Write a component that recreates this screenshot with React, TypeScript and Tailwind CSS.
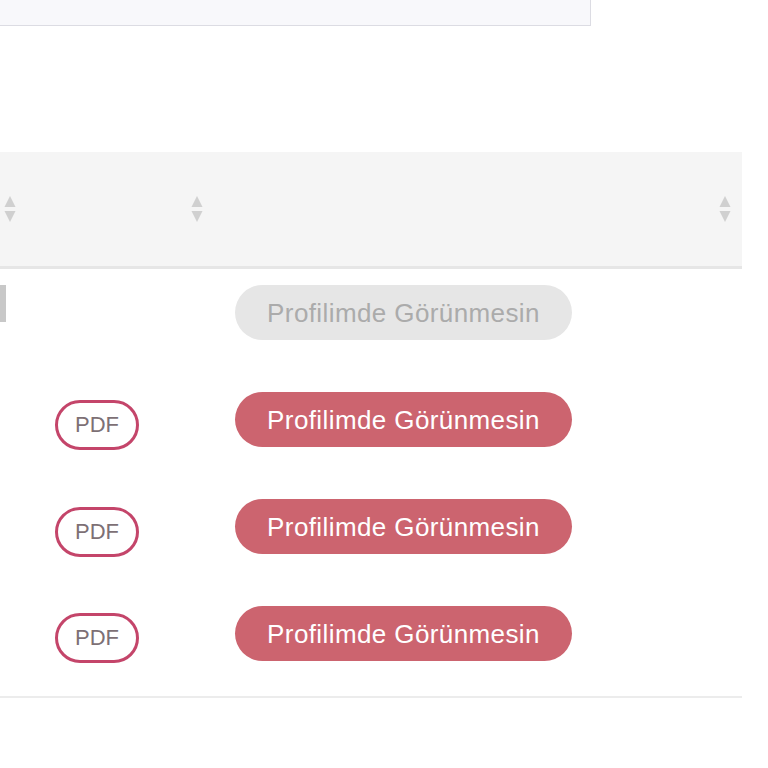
function SortIcon() {
  return (
    <svg width="14" height="30" viewBox="0 0 14 30" className="block">
      <path d="M7 2 L12.5 13 L1.5 13 Z" fill="#d0d0d0" />
      <path d="M7 28 L12.5 17 L1.5 17 Z" fill="#d0d0d0" />
    </svg>
  );
}

function PdfBadge() {
  return (
    <div className="w-[84px] h-[50px] rounded-full border-[3px] border-[#c4456a] flex items-center justify-center text-[22px] text-[#7d7075] leading-none">
      PDF
    </div>
  );
}

function HideButton({ disabled }: { disabled?: boolean }) {
  return (
    <button
      className={
        disabled
          ? "w-[337px] h-[55px] rounded-full bg-[#e6e6e6] text-[#ababab] text-[26px] tracking-[0.4px] leading-none"
          : "w-[337px] h-[55px] rounded-full bg-[#cc646f] text-white text-[26px] tracking-[0.4px] leading-none"
      }
    >
      Profilimde Görünmesin
    </button>
  );
}

const rows = [
  { pdf: false, disabled: true },
  { pdf: true, disabled: false },
  { pdf: true, disabled: false },
  { pdf: true, disabled: false },
];

export default function App() {
  return (
    <div
      className="w-[768px] h-[768px] bg-white overflow-hidden"
      style={{ fontFamily: '"Liberation Sans", Arial, sans-serif' }}
    >
      <div className="w-[591px] h-[26px] bg-[#f8f8fb] border-r border-b border-[#dcdce3]" />

      <div className="mt-[126px] w-[742px]">
        <div className="h-[117px] bg-[#f5f5f5] border-b-[3px] border-[#e6e6e6] flex items-center">
          <div className="w-[17px] flex justify-end">
            <SortIcon />
          </div>
          <div className="w-[187px] flex justify-end">
            <SortIcon />
          </div>
          <div className="flex-1 flex justify-end pr-[10px]">
            <SortIcon />
          </div>
        </div>

        {rows.map((r, i) => (
          <div
            key={i}
            className={
              i === 0
                ? "h-[97px] pt-[16px] flex items-start"
                : i === 3
                ? "h-[118px] pt-[26px] flex items-start border-b-2 border-[#ececec]"
                : "h-[107px] pt-[26px] flex items-start"
            }
          >
            <div className="w-[202px]">
              {r.pdf ? (
                <div className={i === 3 ? "ml-[55px] mt-[7px]" : "ml-[55px] mt-[8px]"}>
                  <PdfBadge />
                </div>
              ) : (
                <div className="w-[6px] h-[37px] bg-[#c8c8c8]" />
              )}
            </div>
            <div className="pl-[33px]">
              <HideButton disabled={r.disabled} />
            </div>
          </div>
        ))}
      </div>
    </div>
  );
}
